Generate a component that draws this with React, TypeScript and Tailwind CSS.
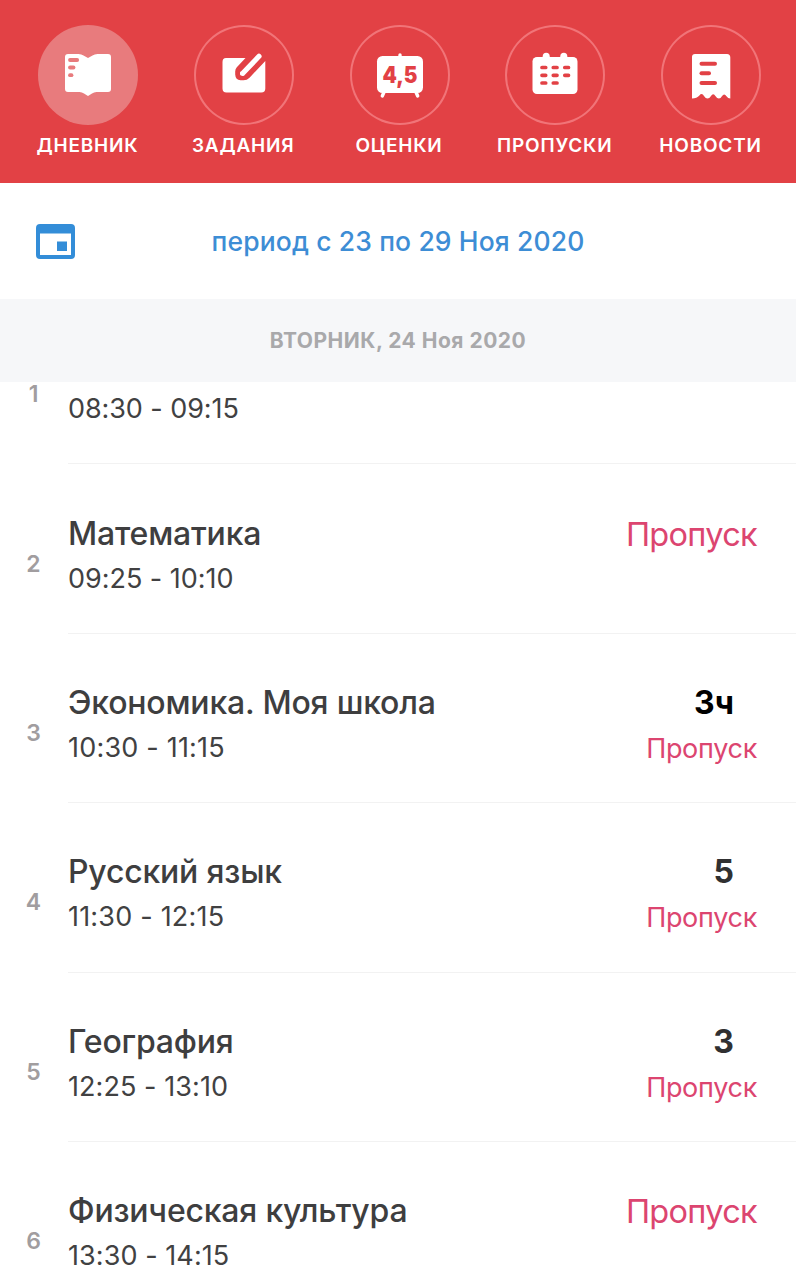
import type { ReactNode } from "react";

type Tab = { label: string; icon: ReactNode; active?: boolean };

type Lesson = {
  n: number;
  title: string;
  time: string;
  timeSpacing: string;
  mark?: string;
  dark?: boolean;
  absent?: boolean;
};

const RED = "#e24145";

const DiaryIcon = () => (
  <svg className="h-[100px] w-[100px]" viewBox="0 0 100 100">
    <path
      fill="#fff"
      d="M30 29H40.500Q43.500 29 45.500 30.500L50 33L54.500 30.500Q56.500 29 59.500 29H70Q73 29 73 32V64Q73 67 70 67H58.500Q56 67 54 68.500L50 71L46 68.500Q44 67 41.500 67H30Q27 67 27 64V32Q27 29 30 29Z"
    />
    <g stroke="#e87b7d" strokeWidth="3.800" strokeLinecap="round">
      <path d="M32 35H39.200" />
      <path d="M32 42.500H35.500" />
      <path d="M32 50.200H33.500" />
    </g>
  </svg>
);

const TasksIcon = () => (
  <svg className="h-[100px] w-[100px]" viewBox="0 0 100 100">
    <path
      fill="#fff"
      d="M32 33H51.500L42.800 42.300Q41.200 44 41.200 46.500V49.500Q41.500 55 46.500 55.200H49.500Q53 55.200 55.500 52.700L71.300 36V63.500Q71.300 67.500 67.300 67.500H32.500Q28.500 67.500 28.500 63.500V37Q28.500 33 32 33Z"
    />
    <path d="M65 31.300L48.800 48.200" stroke="#fff" strokeWidth="5.200" strokeLinecap="round" />
    <path fill="#fff" d="M46.800 46.500L50.600 50Q50 50.600 49 50.600H47.500Q46 50.600 46 49V48Q46 47.200 46.800 46.500Z" />
  </svg>
);

const MarksIcon = () => (
  <svg className="h-[100px] w-[100px]" viewBox="0 0 100 100">
    <g stroke="#fff" strokeWidth="3.400" strokeLinecap="round">
      <path d="M50 30V34" />
      <path d="M34.500 66L32.300 71" />
      <path d="M65.500 66L67.700 71" />
    </g>
    <rect x="27" y="31" width="46" height="37" rx="5.500" fill="#fff" />
    <text
      x="50"
      y="57.500"
      textAnchor="middle"
      fill={RED}
      fontFamily="Inter, sans-serif"
      fontWeight="900"
      fontSize="22.500"
      textLength="35"
      lengthAdjust="spacingAndGlyphs"
    >
      4,5
    </text>
  </svg>
);

const AbsenceIcon = () => (
  <svg className="h-[100px] w-[100px]" viewBox="0 0 100 100">
    <rect x="27.500" y="32" width="45" height="37" rx="4.500" fill="#fff" />
    <g stroke="#fff" strokeWidth="7" strokeLinecap="round">
      <path d="M41.200 31.300V34" />
      <path d="M58.800 31.300V34" />
    </g>
    <g stroke={RED} strokeWidth="3.700" strokeLinecap="round">
      <path d="M37 42.500H40.700M48.300 42.500H52M59.800 42.500H63.500" />
      <path d="M37 50.300H40.700M48.300 50.300H52M59.800 50.300H63.500" />
      <path d="M37 58H40.700M48.300 58H52" />
    </g>
  </svg>
);

const NewsIcon = () => (
  <svg className="h-[100px] w-[100px]" viewBox="0 0 100 100">
    <path
      fill="#fff"
      d="M34 29H66Q69.300 29 69.300 32.500V73.500Q67 73.500 65.500 71.300Q63.200 67.500 60.900 71.300Q59.700 73.500 57.900 73.500Q56 73.500 54.600 71.300Q52.200 67.300 49.800 71.300Q48.500 73.500 46.500 73.500Q44.500 73.500 43.200 71.300Q40.800 67.300 38.400 70.500Q35.800 73.500 31 73.500V32Q31 29 34 29Z"
    />
    <g stroke={RED} strokeWidth="4" strokeLinecap="round">
      <path d="M40.500 38.700H54" />
      <path d="M40.500 48.200H48" />
      <path d="M40.500 57.900H54" />
    </g>
  </svg>
);

const CalendarIcon = () => (
  <svg className="h-[35px] w-[39px]" viewBox="0 0 39 35">
    <rect x="2" y="2" width="35" height="31" rx="2" fill="none" stroke="#338dd8" strokeWidth="4" />
    <path fill="#338dd8" d="M2 2H37V9.500H2ZM21 17.500H31V27H21Z" />
  </svg>
);

const tabs: Tab[] = [
  { label: "ДНЕВНИК", icon: <DiaryIcon />, active: true },
  { label: "ЗАДАНИЯ", icon: <TasksIcon /> },
  { label: "ОЦЕНКИ", icon: <MarksIcon /> },
  { label: "ПРОПУСКИ", icon: <AbsenceIcon /> },
  { label: "НОВОСТИ", icon: <NewsIcon /> },
];

const lessons: Lesson[] = [
  { n: 2, title: "Математика", time: "09:25 - 10:10", timeSpacing: "tracking-[-0.03px]", absent: true },
  {
    n: 3,
    title: "Экономика. Моя школа",
    time: "10:30 - 11:15",
    timeSpacing: "tracking-[0.2px]",
    mark: "3ч",
    dark: true,
    absent: true,
  },
  { n: 4, title: "Русский язык", time: "11:30 - 12:15", timeSpacing: "tracking-[0.2px]", mark: "5", absent: true },
  { n: 5, title: "География", time: "12:25 - 13:10", timeSpacing: "tracking-[0.07px]", mark: "3", absent: true },
  { n: 6, title: "Физическая культура", time: "13:30 - 14:15", timeSpacing: "tracking-[0.07px]", absent: true },
];

function TabButton({ tab }: { tab: Tab }) {
  return (
    <button className="flex w-[155.75px] flex-col items-center">
      <span
        className={
          tab.active
            ? "flex size-[100px] items-center justify-center rounded-full bg-[#e87b7d]"
            : "flex size-[100px] items-center justify-center rounded-full shadow-[inset_0_0_0_2px_#f17478]"
        }
      >
        {tab.icon}
      </span>
      <span className="mt-[9px] pr-[1px] text-[19px] leading-6 font-semibold tracking-[0.8px] whitespace-nowrap text-white">
        {tab.label}
      </span>
    </button>
  );
}

function LessonRow({ lesson }: { lesson: Lesson }) {
  return (
    <li className="flex h-[169.4px]">
      <div className="w-[67px] pt-[85px] text-center text-[23px] leading-7 font-semibold text-[#a19d9f]">
        {lesson.n}
      </div>
      <div className="ml-[1px] flex flex-1 justify-between border-b border-[#f2f2f2] pt-[47px] pr-[39px]">
        <div>
          <div className="text-[32px] leading-[44px] font-medium tracking-[-0.2px] text-[#3e3e3f]">
            {lesson.title}
          </div>
          <div className={"text-[27px] leading-[46px] text-[#414142] " + lesson.timeSpacing}>{lesson.time}</div>
        </div>
        <div className="flex flex-col items-end text-[#dc4570]">
          {lesson.mark && (
            <div
              className={
                lesson.dark
                  ? "pr-[23px] text-[32px] leading-[44px] font-bold text-black"
                  : "pr-[23px] text-[32px] leading-[44px] font-bold text-[#303031]"
              }
            >
              {lesson.mark}
            </div>
          )}
          {lesson.absent && (
            <div
              className={
                lesson.mark
                  ? "text-[27px] leading-[48px] tracking-[-0.3px]"
                  : "text-[32.5px] leading-[45px] tracking-[-0.7px]"
              }
            >
              Пропуск
            </div>
          )}
        </div>
      </div>
    </li>
  );
}

export default function App() {
  return (
    <main className="flex h-[1280px] w-[796px] flex-col overflow-hidden bg-white font-['Inter',sans-serif]">
      <nav className="flex h-[183px] shrink-0 justify-center bg-[#e24145] pt-[25px] pl-[3px]">
        {tabs.map((tab) => (
          <TabButton key={tab.label} tab={tab} />
        ))}
      </nav>
      <section className="grid h-[116px] shrink-0 grid-cols-[76px_1fr_76px] items-center">
        <div className="pl-[36px]">
          <CalendarIcon />
        </div>
        <h1 className="pt-[1px] text-center text-[26.5px] font-medium tracking-[0.12px] text-[#3d8dd5]">
          период с 23 по 29 Ноя 2020
        </h1>
      </section>
      <h2 className="flex h-[83px] shrink-0 items-center justify-center bg-[#f6f7f9] pt-[1px] text-[21px] font-bold tracking-[0.5px] text-[#a9a9ab]">
        ВТОРНИК, 24 Ноя 2020
      </h2>
      <ul className="flex-1">
        <li className="flex h-[82px]">
          <div className="w-[67px] text-center text-[23px] leading-6 font-semibold text-[#a19d9f]">1</div>
          <div className="ml-[1px] flex-1 border-b border-[#f2f2f2] pt-1 text-[27px] leading-[46px] tracking-[-0.08px] text-[#414142]">
            08:30 - 09:15
          </div>
        </li>
        <li className="pt-[0.6px]">
          <ul>
            {lessons.map((lesson) => (
              <LessonRow key={lesson.n} lesson={lesson} />
            ))}
          </ul>
        </li>
      </ul>
    </main>
  );
}
